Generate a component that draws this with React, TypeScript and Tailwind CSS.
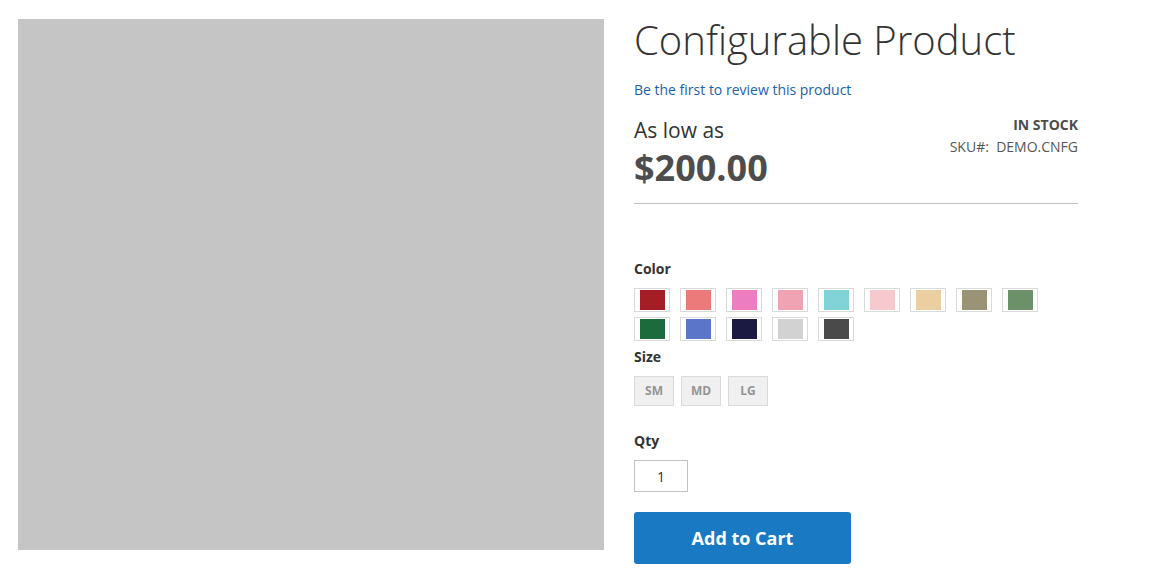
const swatches = [
  "#a51d25",
  "#ec7a7a",
  "#ec7dc0",
  "#f0a3b3",
  "#82d3d8",
  "#f5c9cd",
  "#ebcfa0",
  "#9b9375",
  "#6b906a",
  "#1c6b3d",
  "#5b75c8",
  "#1b1a42",
  "#d2d2d2",
  "#4a4a4a",
];

const sizes = ["SM", "MD", "LG"];

export default function App() {
  return (
    <div
      className="flex w-[1166px] h-[584px] bg-white pl-[18px] pt-[19px] text-[#333]"
      style={{ fontFamily: "'Open Sans', 'Liberation Sans', sans-serif" }}
    >
      {/* Product image */}
      <div className="w-[586px] h-[531px] bg-[#c5c5c5] shrink-0" />

      {/* Product info */}
      <div className="w-[444px] ml-[30px] flex flex-col">
        <h1 className="text-[40px] font-light leading-[44px] -mt-[1px] text-[#333]">
          Configurable Product
        </h1>
        <a href="#" className="text-[14px] leading-5 mt-[18px] text-[#1a62ad]">
          Be the first to review this product
        </a>

        <div className="flex justify-between mt-[16px]">
          <div>
            <div className="text-[21px] leading-[28px] text-[#333]">As low as</div>
            <div className="text-[36px] font-bold leading-[42px] text-[#4d4d4d] mt-[3px]">
              $200.00
            </div>
          </div>
          <div className="text-right text-[14px] leading-[22px] -mt-[2px] text-[#575757]">
            <div className="font-bold text-[#4d4d4d]">IN STOCK</div>
            <div>SKU#:&nbsp; DEMO.CNFG</div>
          </div>
        </div>

        <div className="h-px bg-[#c1c1c1] mt-[14px]" />

        {/* Color */}
        <div className="text-[14px] font-bold leading-5 mt-[55px]">Color</div>
        <div className="flex flex-wrap w-[420px] mt-[9px]">
          {swatches.map((c) => (
            <div
              key={c}
              className="w-[36px] h-[24px] border border-[#dadada] mr-[10px] mb-[5px] flex items-center justify-center"
            >
              <div className="w-[25px] h-[20px]" style={{ backgroundColor: c }} />
            </div>
          ))}
        </div>

        {/* Size */}
        <div className="text-[14px] font-bold leading-5 mt-[1px]">Size</div>
        <div className="flex gap-[7px] mt-[9px]">
          {sizes.map((s) => (
            <div
              key={s}
              className="w-[40px] h-[30px] bg-[#f0f0f0] border border-[#dadada] flex items-center justify-center text-[12px] font-bold text-[#949494]"
            >
              {s}
            </div>
          ))}
        </div>

        {/* Qty */}
        <div className="text-[14px] font-bold leading-5 mt-[25px]">Qty</div>
        <div className="w-[54px] h-[32px] border border-[#c2c2c2] mt-[9px] flex items-center justify-center text-[14px] text-[#333]">
          1
        </div>

        <button className="w-[217px] h-[52px] mt-[20px] rounded-[3px] bg-[#1979c3] text-white text-[18px] font-bold">
          Add to Cart
        </button>
      </div>
    </div>
  );
}
